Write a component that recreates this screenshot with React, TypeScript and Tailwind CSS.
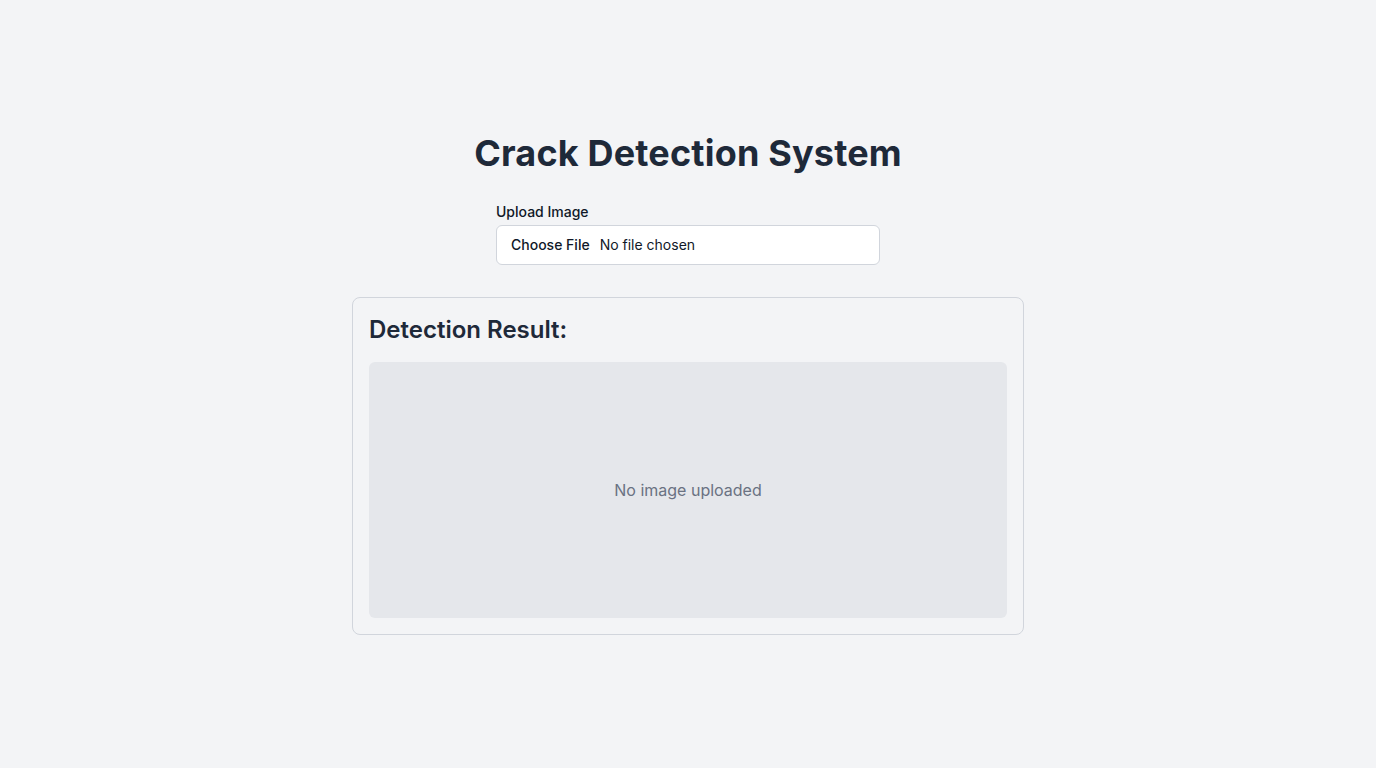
import React from "react";

export default function App() {
  return (
    <div
      className="min-h-screen bg-gray-100 flex flex-col items-center justify-center text-gray-900"
      style={{ fontFamily: "Inter, 'Noto Sans', sans-serif" }}
    >
      <h1 className="text-4xl leading-10 font-bold text-gray-800 mb-[29px] tracking-[0.005em]">Crack Detection System</h1>
      <div className="w-96 mb-8">
        <div className="text-sm leading-5 font-medium text-gray-900 mb-[3px]">Upload Image</div>
        <div className="h-10 bg-white border border-gray-300 rounded-md flex items-center pl-[14px] text-sm">
          <span className="font-medium text-gray-900 mr-[10px]">Choose File</span>
          <span className="text-gray-900">No file chosen</span>
        </div>
      </div>
      <div className="w-[672px] border border-gray-300 rounded-lg p-4">
        <h2 className="text-2xl leading-8 font-semibold text-gray-800 mb-4">Detection Result:</h2>
        <div className="h-64 bg-gray-200 rounded-md flex items-center justify-center">
          <span className="text-gray-500 text-base">No image uploaded</span>
        </div>
      </div>
    </div>
  );
}
